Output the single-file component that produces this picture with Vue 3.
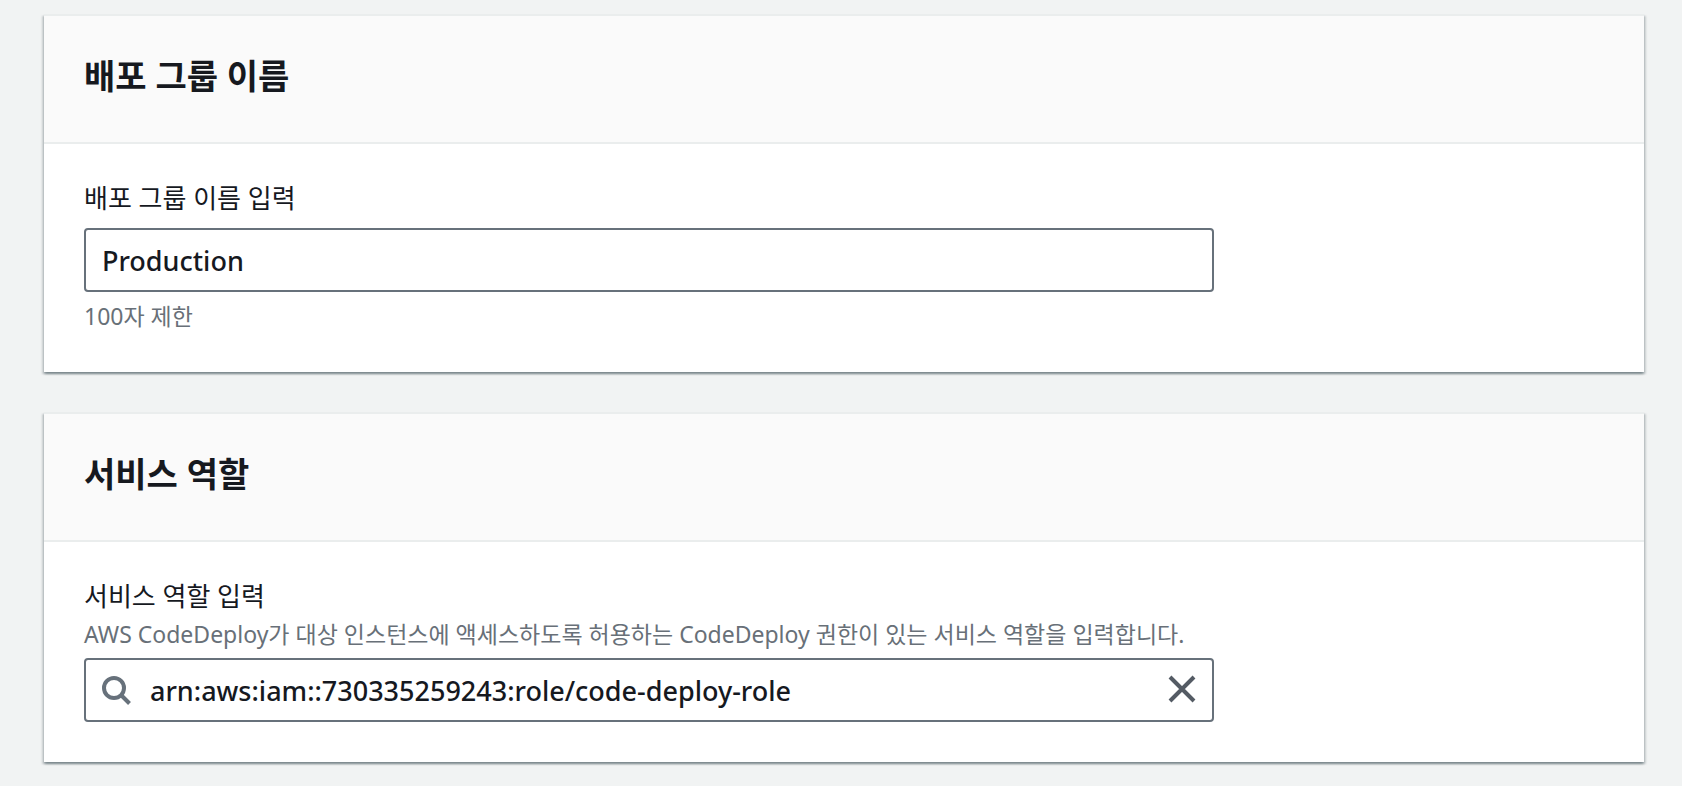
<script setup>
import { ref } from 'vue'

const groupName = ref('Production')
const roleArn = ref('arn:aws:iam::730335259243:role/code-deploy-role')
</script>

<template>
  <main class="page">
    <section class="card" aria-labelledby="group-title">
      <header class="card-header">
        <h2 id="group-title" class="card-title">배포 그룹 이름</h2>
      </header>
      <div class="card-body">
        <div class="field">
          <label class="field-label" for="group-name">배포 그룹 이름 입력</label>
          <div class="control">
            <input id="group-name" v-model="groupName" class="control-input" type="text" maxlength="100" aria-describedby="group-hint" />
          </div>
          <p id="group-hint" class="hint hint-below">100자 제한</p>
        </div>
      </div>
    </section>

    <section class="card" aria-labelledby="role-title">
      <header class="card-header">
        <h2 id="role-title" class="card-title">서비스 역할</h2>
      </header>
      <div class="card-body">
        <div class="field">
          <label class="field-label" for="role-arn">서비스 역할 입력</label>
          <p id="role-hint" class="hint hint-above">AWS CodeDeploy가 대상 인스턴스에 액세스하도록 허용하는 CodeDeploy 권한이 있는 서비스 역할을 입력합니다.</p>
          <div class="control">
            <svg class="search-icon" viewBox="0 0 32 32" aria-hidden="true">
              <circle cx="14" cy="14" r="10" />
              <path d="M21 21l8.500 8.500" />
            </svg>
            <input id="role-arn" v-model="roleArn" class="control-input" type="text" aria-describedby="role-hint" />
            <button class="clear" type="button" aria-label="지우기" @click="roleArn = ''">
              <svg class="clear-icon" viewBox="0 0 32 32" aria-hidden="true">
                <path d="M4 3l24 24M28 3L4 27" />
              </svg>
            </button>
          </div>
        </div>
      </div>
    </section>
  </main>
</template>

<style>
body {
  background: #f1f3f3;
}
</style>

<style scoped>
.page {
  display: flex;
  flex-direction: column;
  gap: 40px;
  padding: 14px 38px 24px 44px;
  color: #16191f;
  font-family: "Noto Sans", "Noto Sans CJK KR", sans-serif;
}

.card {
  background: #fff;
  border-top: 2px solid #eaeded;
  box-shadow:
    0 2px 2px rgba(0, 28, 36, 0.3),
    2px 2px 2px rgba(0, 28, 36, 0.15),
    -2px 2px 2px rgba(0, 28, 36, 0.15);
}

.card-header {
  padding: 38px 40px 44px;
  background: #fafafa;
  border-bottom: 2px solid #eaeded;
}

.card-title {
  margin: 0;
  font-size: 34px;
  font-weight: 700;
  line-height: 44px;
}

.card-body {
  display: grid;
  grid-template-columns: repeat(12, minmax(0, 1fr));
  column-gap: 40px;
  padding: 32px 40px 40px;
}

.field {
  grid-column: span 9;
}

.field-label {
  display: block;
  font-size: 26px;
  line-height: 44px;
}

.hint {
  margin: 0;
  color: #687078;
  font-size: 23px;
  line-height: 32px;
}

.hint-above {
  margin-bottom: 8px;
}

.hint-below {
  margin-top: 8px;
}

.control {
  display: flex;
  align-items: center;
  gap: 16px;
  box-sizing: border-box;
  height: 64px;
  padding: 0 14px;
  background: #fff;
  border: 2px solid #67717b;
  border-radius: 4px;
}

.field-label + .control {
  margin-top: 8px;
}

.control-input {
  flex: 1;
  min-width: 0;
  height: 100%;
  padding: 0 2px;
  border: 0;
  outline: 0;
  background: transparent;
  color: inherit;
  font-family: inherit;
  font-size: 27px;
  font-weight: 500;
}

.search-icon {
  flex: none;
  width: 32px;
  height: 32px;
  fill: none;
  stroke: #67717b;
  stroke-width: 4;
}

.clear {
  flex: none;
  display: flex;
  padding: 0;
  border: 0;
  background: transparent;
  cursor: pointer;
}

.clear-icon {
  width: 32px;
  height: 32px;
  fill: none;
  stroke: #545b64;
  stroke-width: 4;
}
</style>
